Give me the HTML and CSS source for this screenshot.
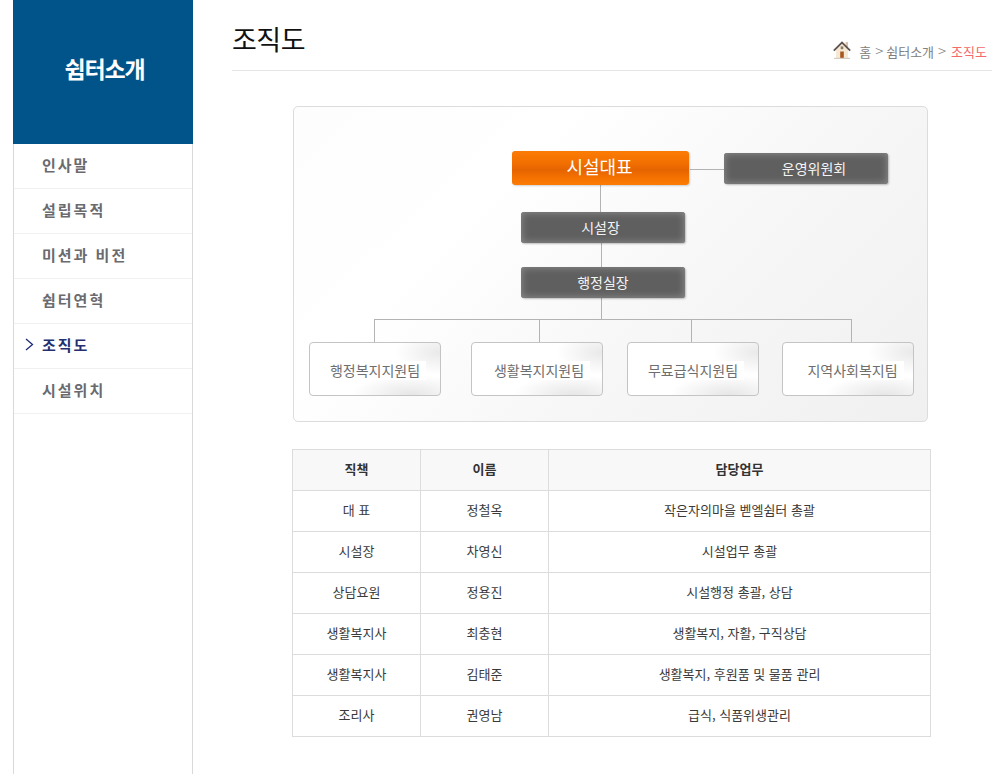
FILE: index.html
```html
<!DOCTYPE html>
<html lang="ko">
<head>
<meta charset="utf-8">
<title>조직도</title>
<link rel="stylesheet" href="styles.css">
</head>
<body>
<div class="page">
  <aside class="sidebar">
    <h2 class="side-title">쉼터소개</h2>
    <ul class="side-menu">
      <li class="side-item">인사말</li>
      <li class="side-item">설립목적</li>
      <li class="side-item">미션과 비전</li>
      <li class="side-item">쉼터연혁</li>
      <li class="side-item is-active">
        <svg class="side-arrow" width="9" height="13" viewBox="0 0 9 13"><path d="M1 1l6.5 5.5L1 12" fill="none" stroke="#1c2a78" stroke-width="1.3"/></svg>
        조직도
      </li>
      <li class="side-item">시설위치</li>
    </ul>
  </aside>
  <main class="content">
    <header class="head">
      <h1 class="head-title">조직도</h1>
      <nav class="crumbs">
        <svg class="home" width="18" height="18" viewBox="0 0 18 18">
          <rect x="12.6" y="1" width="2.4" height="7" fill="#d9c3ab"/>
          <path d="M3 8.5L9 3l6 5.5V17H3z" fill="#f5e8d4"/>
          <path d="M0.8 9.6L9 1.6l8.2 8" fill="none" stroke="#5f5450" stroke-width="1.8"/>
          <path d="M7.2 10.5h3.6V17H7.2z" fill="#a8581f"/>
          <rect x="7.7" y="5.4" width="2.6" height="2.8" fill="#8d7a66"/>
          <rect x="1" y="16.8" width="16" height="1.2" fill="#d4ccc2"/>
        </svg>
        <span class="crumb">홈</span>
        <span class="crumb-sep">&gt;</span>
        <span class="crumb">쉼터소개</span>
        <span class="crumb-sep">&gt;</span>
        <span class="crumb-now">조직도</span>
      </nav>
    </header>

    <section class="chart">
      <span class="line" style="left:306px;top:62px;width:1px;height:43px"></span>
      <span class="line" style="left:396px;top:62px;width:35px;height:1px"></span>
      <span class="line" style="left:307px;top:136px;width:1px;height:25px"></span>
      <span class="line" style="left:307px;top:191px;width:1px;height:22px"></span>
      <span class="line" style="left:80px;top:212px;width:478px;height:1px"></span>
      <span class="line" style="left:80px;top:212px;width:1px;height:24px"></span>
      <span class="line" style="left:245px;top:212px;width:1px;height:24px"></span>
      <span class="line" style="left:397px;top:212px;width:1px;height:24px"></span>
      <span class="line" style="left:557px;top:212px;width:1px;height:24px"></span>

      <div class="node node-lead" style="left:219px;top:44px;width:177px;height:34px"><span class="lead-text">시설대표</span></div>
      <div class="node node-dark node-board" style="left:431px;top:46px;width:164px;height:31px">운영위원회</div>
      <div class="node node-dark node-left" style="left:228px;top:105px;width:164px;height:31px">시설장</div>
      <div class="node node-dark" style="left:228px;top:160px;width:164px;height:31px">행정실장</div>
      <div class="node node-team" style="left:16px;top:235px"><span class="team-text">행정복지지원팀</span></div>
      <div class="node node-team" style="left:178px;top:235px"><span class="team-text team-shift">생활복지지원팀</span></div>
      <div class="node node-team" style="left:334px;top:235px"><span class="team-text">무료급식지원팀</span></div>
      <div class="node node-team" style="left:489px;top:235px"><span class="team-text team-far">지역사회복지팀</span></div>
    </section>

    <table class="staff">
      <colgroup><col class="c1"><col class="c2"><col class="c3"></colgroup>
      <thead>
        <tr><th>직책</th><th>이름</th><th>담당업무</th></tr>
      </thead>
      <tbody>
        <tr><td>대 표</td><td>정철옥</td><td>작은자의마을 벧엘쉼터 총괄</td></tr>
        <tr><td>시설장</td><td>차영신</td><td>시설업무 총괄</td></tr>
        <tr><td>상담요원</td><td>정용진</td><td>시설행정 총괄, 상담</td></tr>
        <tr><td>생활복지사</td><td>최충현</td><td>생활복지, 자활, 구직상담</td></tr>
        <tr><td>생활복지사</td><td>김태준</td><td>생활복지, 후원품 및 물품 관리</td></tr>
        <tr><td>조리사</td><td>권영남</td><td>급식, 식품위생관리</td></tr>
      </tbody>
    </table>
  </main>
</div>
</body>
</html>
```

FILE: styles.css
```css
* { box-sizing: border-box; }
html, body { margin: 0; padding: 0; height: 100%; background: #fff; }
body { font-family: "Noto Sans CJK KR", "Noto Sans", sans-serif; overflow: hidden; }

.page { display: flex; height: 774px; padding-left: 13px; }

.sidebar {
  width: 180px;
  flex: none;
  border-left: 1px solid #d9d9d9;
  border-right: 1px solid #d9d9d9;
}
.side-title {
  margin: 0 -1px;
  height: 144px;
  background: #005489;
  color: #fff;
  font-size: 23px;
  font-weight: 700;
  letter-spacing: -1.2px;
  display: flex;
  align-items: center;
  justify-content: center;
  padding: 0 0 9px 3px;
}
.side-menu { list-style: none; margin: 0; padding: 0; }
.side-item {
  position: relative;
  height: 45px;
  padding: 0 0 4px 28px;
  display: flex;
  align-items: center;
  border-bottom: 1px solid #f0f0f0;
  color: #6a6a6f;
  font-size: 15px;
  font-weight: 700;
  letter-spacing: 2px;
}
.side-item.is-active { color: #25306f; }
.side-arrow { position: absolute; left: 11px; top: 14px; }

.content { width: 760px; margin-left: 39px; flex: none; }

.head {
  height: 71px;
  display: flex;
  justify-content: space-between;
  border-bottom: 1px solid #e4e4e4;
}
.head-title {
  margin: 19px 0 0;
  font-size: 27px;
  line-height: 40px;
  font-weight: 400;
  color: #111;
  letter-spacing: -0.5px;
}
.crumbs {
  display: flex;
  align-items: center;
  gap: 4px;
  height: 20px;
  margin: 41px 5px 0 0;
  font-size: 13px;
  color: #808080;
}
.home { margin: -2px 4px 0 0; }
.crumb-sep { font-size: 15px; font-weight: 300; letter-spacing: -1px; margin-top: -2px; }
.crumb-now { color: #f46a6a; margin-left: 2px; }

.chart {
  position: relative;
  width: 635px;
  height: 316px;
  margin: 35px 0 27px 61px;
  border: 1px solid #dcdcdc;
  border-radius: 5px;
  background: linear-gradient(135deg, #fdfdfd 0%, #fff 30%, #f8f7f7 60%, #f0f0f0 100%);
}
.line { position: absolute; background: #b3b3b3; }
.node {
  position: absolute;
  display: flex;
  align-items: center;
  justify-content: center;
  margin-left: -1px;
}
.node-lead {
  background: linear-gradient(#fb7c05 0%, #f27000 35%, #e66400 55%, #f57200 80%, #fb7c05 100%);
  border-radius: 3px;
  color: #fff;
  font-size: 18px;
  padding-right: 2px;
  box-shadow: 1px 1px 2px rgba(0,0,0,.18);
}
.lead-text { margin-top: -4px; }
.node-dark {
  background: #5f5f5f;
  border-radius: 3px;
  color: #f4f4f4;
  font-size: 14px;
  padding-bottom: 1px;
  box-shadow: inset 0 0 7px 1px #8a8a8a, 1px 1px 2px rgba(0,0,0,.25);
}
.node-board { padding-left: 16px; }
.node-left { padding-right: 5px; }
.node-team {
  width: 132px;
  height: 54px;
  background:
    radial-gradient(ellipse 45px 22px at 100% 18%, #e9e9e9, rgba(255,255,255,0)),
    radial-gradient(ellipse 60px 20px at 78% 100%, #e6e6e6, rgba(255,255,255,0)),
    #fff;
  border: 1px solid #c4c4c4;
  border-radius: 4px;
  color: #6e6e6e;
  font-size: 14px;
  padding-top: 3px;
}
.team-text { background: #fff; height: 19px; line-height: 19px; padding: 0 6px; }
.team-shift { margin-left: 4px; }
.team-far { margin-left: 9px; }

.staff {
  border-collapse: collapse;
  table-layout: fixed;
  width: 639px;
  margin-left: 60px;
  font-size: 13px;
  color: #3a3a3a;
}
.c1, .c2 { width: 128px; }
.staff th, .staff td {
  height: 41px;
  padding: 0 0 3px;
  border: 1px solid #dcdcdc;
  text-align: center;
  font-weight: 400;
}
.staff th {
  background: #f8f8f8;
  font-weight: 700;
  color: #333;
}
```
